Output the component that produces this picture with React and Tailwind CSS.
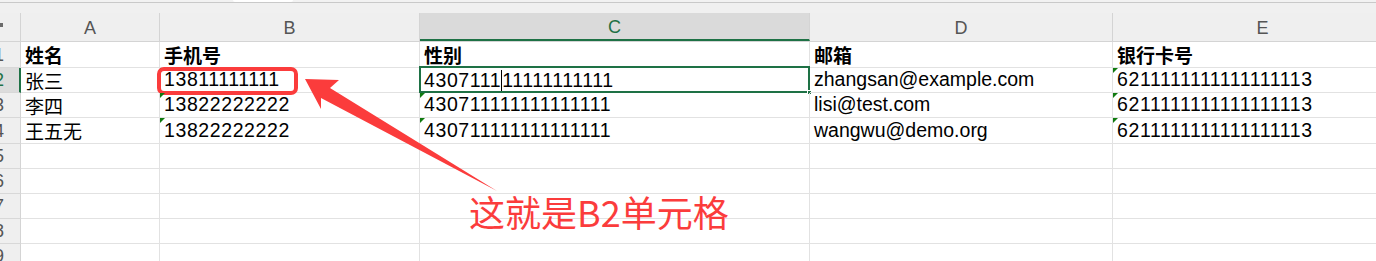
import React from "react";

const COLS = [
  { key: "A", w: "w-[139px]" },
  { key: "B", w: "w-[260px]" },
  { key: "C", w: "w-[390px]" },
  { key: "D", w: "w-[303px]" },
  { key: "E", w: "w-[300px]" },
];

// each row: cells A..E, and which cells carry the "number stored as text" flag
const ROWS = [
  { n: 1, h: "h-[26px]", cells: ["姓名", "手机号", "性别", "邮箱", "银行卡号"], head: true },
  {
    n: 2,
    h: "h-[25px]",
    cells: ["张三", "13811111111", "CURSOR", "zhangsan@example.com", "6211111111111111113"],
    flags: [false, true, false, false, true],
  },
  {
    n: 3,
    h: "h-[25px]",
    cells: ["李四", "13822222222", "430711111111111111", "lisi@test.com", "6211111111111111113"],
    flags: [false, true, true, false, true],
  },
  {
    n: 4,
    h: "h-[26px]",
    cells: ["王五无", "13822222222", "430711111111111111", "wangwu@demo.org", "6211111111111111113"],
    flags: [false, true, true, false, true],
  },
  { n: 5, h: "h-[25px]", cells: ["", "", "", "", ""] },
  { n: 6, h: "h-[25px]", cells: ["", "", "", "", ""] },
  { n: 7, h: "h-[25px]", cells: ["", "", "", "", ""] },
  { n: 8, h: "h-[25px]", cells: ["", "", "", "", ""] },
  { n: 9, h: "h-[25px]", cells: ["", "", "", "", ""] },
];

const Flag = () => (
  <span className="absolute left-0 top-0 w-0 h-0 border-t-[5px] border-r-[5px] border-t-[#0f7a0f] border-r-transparent" />
);

const isDigits = (s) => /^\d+$/.test(s);

function CellText({ value, col, head }) {
  if (value === "CURSOR") {
    return (
      <span className="font-['Liberation_Sans'] text-[19.5px] tracking-[0.6px] text-black">
        4307111
        <span className="inline-block w-px h-[21px] bg-black align-[-4px]" />
        11111111111
      </span>
    );
  }
  if (col === 0 || head) {
    return (
      <span
        className={`font-['Noto_Sans_CJK_SC',sans-serif] text-[19px] text-black ${
          head ? "font-bold" : "font-normal"
        }`}
      >
        {value}
      </span>
    );
  }
  return (
    <span
      className={`font-['Liberation_Sans'] text-[19.5px] text-black ${
        isDigits(value) ? "tracking-[0.6px]" : ""
      }`}
    >
      {value}
    </span>
  );
}

export default function App() {
  return (
    <div className="relative w-[1376px] h-[261px] overflow-hidden bg-white font-['Liberation_Sans',sans-serif]">
      {/* strip under the formula bar */}
      <div className="flex h-[3px] bg-[#f2f2f2] border-b border-[#c9c9c9]">
        <div className="w-[233px]" />
        <div className="w-[60px] bg-white rounded-b-[3px]" />
      </div>
      <div className="h-[10px] bg-[#f0f0f0]" />

      {/* column headers */}
      <div className="flex h-[29px] bg-[#efefef] border-b border-[#d4d4d4] leading-none">
        <div className="relative w-[21px] shrink-0 border-r border-[#d4d4d4]">
          <span className="absolute left-0 top-[10px] w-[3px] h-[4px] bg-[#6b6b6b]" />
        </div>
        {COLS.map((c) => (
          <div
            key={c.key}
            className={`${c.w} shrink-0 flex items-center justify-center pt-[2px] text-[18px] border-r ${
              c.key === "C"
                ? "bg-[#dadada] text-[#1e7145] border-[#d4d4d4] border-b-2 border-b-[#1e7145]"
                : "text-[#555] border-[#d4d4d4]"
            }`}
          >
            {c.key}
          </div>
        ))}
      </div>

      {/* grid body */}
      {ROWS.map((r) => (
        <div key={r.n} className={`flex ${r.h} leading-none`}>
          <div
            className={`w-[21px] shrink-0 overflow-hidden border-b border-[#d8d8d8] ${
              r.n === 2 ? "bg-[#dcdcdc] border-r-2 border-r-[#1e7145]" : "bg-[#efefef] border-r border-r-[#d4d4d4]"
            }`}
          >
            <div
              className={`ml-[-24px] w-[46px] h-full flex items-center justify-center text-[18px] ${
                r.n === 2 ? "text-[#1e7145]" : "text-[#555]"
              }`}
            >
              {r.n}
            </div>
          </div>
          {COLS.map((c, i) => (
            <div
              key={c.key}
              className={`relative ${c.w} shrink-0 flex items-center pl-[4px] border-r border-b border-[#e2e2e2] whitespace-nowrap`}
            >
              {r.flags && r.flags[i] && <Flag />}
              {r.cells[i] && <CellText value={r.cells[i]} col={i} head={r.head} />}

              {/* active cell C2 */}
              {r.n === 2 && c.key === "C" && (
                <>
                  <span className="absolute left-[-1px] top-[-2px] right-[-1px] bottom-[-1px] border-2 border-[#1e7145]" />
                  <span className="absolute right-[-3px] bottom-[-3px] w-[5px] h-[5px] bg-[#1e7145] border border-white" />
                </>
              )}

              {/* highlight box around B2 */}
              {r.n === 2 && c.key === "B" && (
                <span className="absolute left-[-3px] top-[-1px] w-[141px] h-[28px] border-[4px] border-[#fb3c3c] rounded-[7px]" />
              )}
            </div>
          ))}
        </div>
      ))}

      {/* callout arrow */}
      <svg className="absolute left-0 top-0 pointer-events-none" width="1376" height="261">
        <polygon
          points="305,79 339,80 330,88 497,191 321,98 321,109"
          fill="#fb3c3c"
        />
      </svg>

      <div className="absolute left-[469px] top-[193px] text-[36px] leading-none text-[#fb3c3c] font-['Noto_Sans_CJK_SC',sans-serif] whitespace-nowrap">
        这就是B2单元格
      </div>
    </div>
  );
}
